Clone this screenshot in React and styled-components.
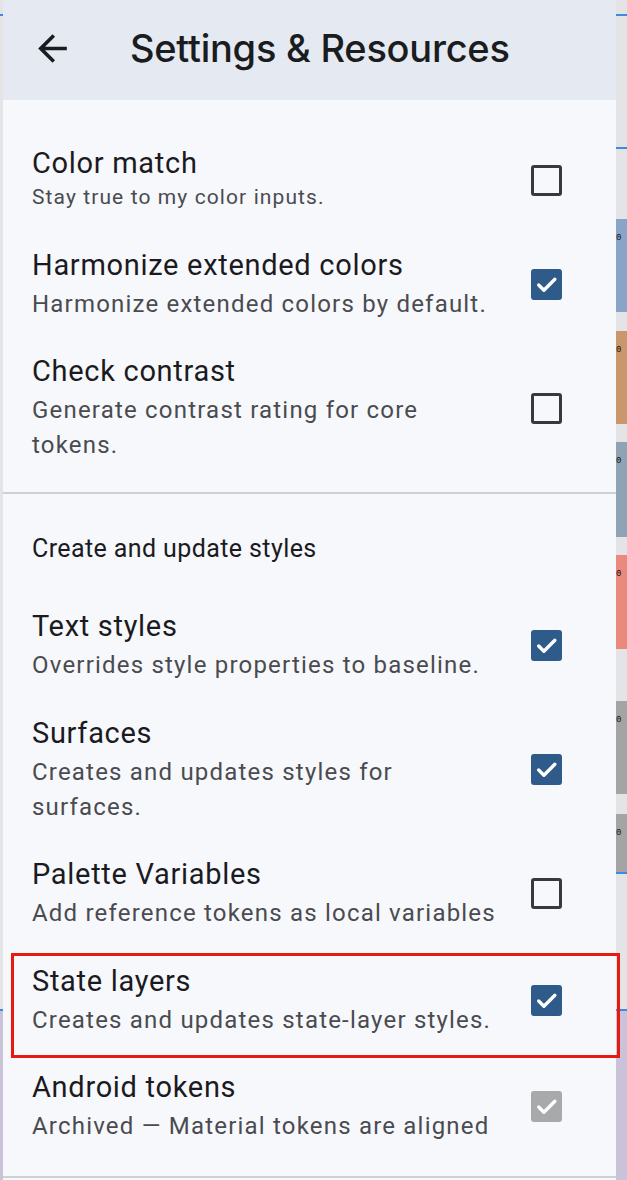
import React from "react";
import styled, { createGlobalStyle } from "styled-components";

const Global = createGlobalStyle`
  html, body { margin: 0; padding: 0; background: #e4e4e6; }
  body { font-family: Roboto, "Noto Sans", Arial, sans-serif; }
  * { box-sizing: border-box; }
`;

const Page = styled.div`
  display: flex;
  width: 627px;
  height: 1180px;
  overflow: hidden;
  background: #e4e4e6;
`;

const Gutter = styled.div`
  width: ${(p) => p.$w}px;
  flex: none;
  display: flex;
  flex-direction: column;
  overflow: hidden;
`;

const Band = styled.div`
  height: ${(p) => p.$h}px;
  flex: ${(p) => (p.$grow ? "1" : "none")};
  background: ${(p) => p.$c};
  border-top: ${(p) => (p.$line ? "2px dashed #3b8be0" : "none")};
  font: 9px "Liberation Mono", monospace;
  color: #111;
  white-space: nowrap;
  padding-top: 14px;
  line-height: 10px;
`;

const Panel = styled.div`
  width: 613px;
  flex: none;
  display: flex;
  flex-direction: column;
  background: #f7f8fc;
  position: relative;
  z-index: 2;
`;

const Header = styled.header`
  height: 100px;
  flex: none;
  background: #e5e9f1;
  display: flex;
  align-items: center;
  padding-left: 28px;
  gap: 56px;
`;

const BackButton = styled.button`
  border: 0;
  background: none;
  padding: 0;
  width: 43px;
  height: 43px;
  display: flex;
  color: #1b1c20;
  margin-top: -4px;
`;

const Title = styled.h1`
  margin: 0;
  font-family: Inter, Roboto, sans-serif;
  font-weight: 500;
  font-size: 38px;
  letter-spacing: -0.25px;
  color: #1a1c20;
  margin-top: -4px;
`;

const Section = styled.section`
  padding: ${(p) => p.$pt}px 0 ${(p) => p.$pb}px;
  border-bottom: 2px solid #cfd0d4;
`;

const SectionTitle = styled.h2`
  margin: 0 0 28px;
  padding-left: 29px;
  font-weight: 400;
  font-size: 25px;
  line-height: 30px;
  color: #1b1b1f;
  letter-spacing: 0.4px;
`;

const Row = styled.div`
  position: relative;
  display: flex;
  align-items: center;
  padding: 16px 54px 15.5px 29px;
`;

const RowText = styled.div`
  flex: 1;
  display: flex;
  flex-direction: column;
`;

const RowTitle = styled.div`
  font-size: 29px;
  line-height: 36px;
  color: #1b1b1f;
  letter-spacing: 0.7px;
`;

const RowSub = styled.div`
  margin-top: ${(p) => (p.$tight ? -1 : 4)}px;
  font-size: ${(p) => (p.$tight ? 21 : 24)}px;
  line-height: 35px;
  color: #4a4b50;
  letter-spacing: ${(p) => (p.$tight ? 1.1 : 1.2)}px;
  max-width: 468px;
`;

const Box = styled.span`
  width: 31px;
  height: 31px;
  flex: none;
  border-radius: 3px;
  display: flex;
  align-items: center;
  justify-content: center;
  border: ${(p) => (p.$state === "off" ? "3px solid #38393c" : "none")};
  background: ${(p) =>
    p.$state === "on" ? "#2f5b8b" : p.$state === "disabled" ? "#a8a9ab" : "transparent"};
`;

const Highlight = styled.div`
  position: absolute;
  top: 6px;
  left: 8px;
  right: -4px;
  bottom: -5px;
  border: 3px solid #e8190f;
  pointer-events: none;
`;

function Check({ state }) {
  return (
    <Box $state={state}>
      {state !== "off" && (
        <svg width="25" height="25" viewBox="0 0 24 24" fill="none">
          <path d="M4.5 12.5l5 5L20 7" stroke="#fff" strokeWidth="3.2" strokeLinecap="round" strokeLinejoin="round" />
        </svg>
      )}
    </Box>
  );
}

function SettingRow({ title, sub, state, tight, highlight }) {
  return (
    <Row>
      <RowText>
        <RowTitle>{title}</RowTitle>
        <RowSub $tight={tight}>{sub}</RowSub>
      </RowText>
      <Check state={state} />
      {highlight && <Highlight />}
    </Row>
  );
}

const leftBands = [
  { h: 10, c: "#e4e4e6" },
  { h: 995, c: "#e4e4e6", line: true },
  { grow: true, c: "#c9c2d8", line: true },
];

const rightBands = [
  { h: 10, c: "#e4e4e6" },
  { h: 133, c: "#e4e4e6", line: true },
  { h: 72, c: "#e4e4e6", line: true },
  { h: 93, c: "#8aa4c7", t: "0" },
  { h: 19, c: "#e4e4e6" },
  { h: 93, c: "#c8976c", t: "0" },
  { h: 18, c: "#e4e4e6" },
  { h: 95, c: "#8ea3b4", t: "0" },
  { h: 18, c: "#e4e4e6" },
  { h: 94, c: "#e98a7c", t: "0" },
  { h: 52, c: "#e4e4e6" },
  { h: 93, c: "#a4a4a5", t: "0" },
  { h: 20, c: "#e4e4e6" },
  { h: 58, c: "#a4a4a5", t: "0" },
  { h: 137, c: "#e4e4e6", line: true },
  { grow: true, c: "#c9c2d8", line: true },
];

export default function App() {
  return (
    <>
      <Global />
      <Page>
        <Gutter $w={3}>
          {leftBands.map((b, i) => (
            <Band key={i} $h={b.h} $c={b.c} $grow={b.grow} $line={b.line} />
          ))}
        </Gutter>
        <Panel>
          <Header>
            <BackButton aria-label="Back">
              <svg width="43" height="43" viewBox="0 0 24 24" fill="currentColor">
                <path d="M20 11H7.83l5.59-5.59L12 4l-8 8 8 8 1.41-1.41L7.83 13H20v-2z" />
              </svg>
            </BackButton>
            <Title>Settings &amp; Resources</Title>
          </Header>
          <Section $pt={29} $pb={13.5}>
            <SettingRow title="Color match" sub="Stay true to my color inputs." state="off" tight />
            <SettingRow title="Harmonize extended colors" sub="Harmonize extended colors by default." state="on" />
            <SettingRow title="Check contrast" sub="Generate contrast rating for core tokens." state="off" />
          </Section>
          <Section $pt={40} $pb={16}>
            <SectionTitle>Create and update styles</SectionTitle>
            <SettingRow title="Text styles" sub="Overrides style properties to baseline." state="on" />
            <SettingRow title="Surfaces" sub="Creates and updates styles for surfaces." state="on" />
            <SettingRow title="Palette Variables" sub="Add reference tokens as local variables" state="off" />
            <SettingRow title="State layers" sub="Creates and updates state-layer styles." state="on" highlight />
            <SettingRow title="Android tokens" sub="Archived — Material tokens are aligned" state="disabled" />
          </Section>
        </Panel>
        <Gutter $w={11}>
          {rightBands.map((b, i) => (
            <Band key={i} $h={b.h} $c={b.c} $grow={b.grow} $line={b.line}>
              {b.t}
            </Band>
          ))}
        </Gutter>
      </Page>
    </>
  );
}
